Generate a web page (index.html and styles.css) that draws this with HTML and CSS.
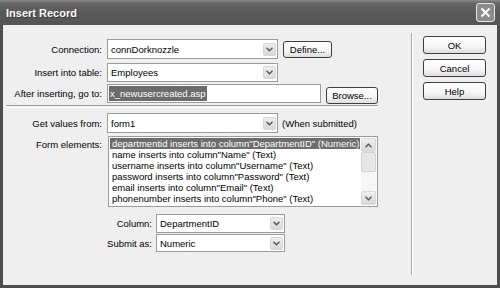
FILE: index.html
```html
<!DOCTYPE html>
<html lang="en">
<head>
    <meta charset="UTF-8">
    <title>Insert Record</title>
    <link rel="stylesheet" href="styles.css">
</head>
<body>
    <div class="window">
        <!-- Title bar -->
        <div class="titlebar">
            <span class="title">Insert Record</span>
            <span class="close-box">
                <svg width="11" height="11" viewBox="0 0 11 11"><path d="M1.5 1.5 L9.5 9.5 M9.5 1.5 L1.5 9.5" stroke="#fff" stroke-width="2" fill="none"/></svg>
            </span>
        </div>

        <div class="client">
            <div class="main">
                <div class="row row-conn">
                    <span class="lbl">Connection:</span>
                    <div class="select sel-wide"><span class="val">connDorknozzle</span><span class="drop"><svg width="7" height="5" viewBox="0 0 7 5"><path d="M0.5 0.8 L3.5 3.8 L6.5 0.8" stroke="#555" stroke-width="1.4" fill="none"/></svg></span></div>
                    <button class="btn btn-define">Define...</button>
                </div>
                <div class="row row-table">
                    <span class="lbl">Insert into table:</span>
                    <div class="select sel-wide"><span class="val">Employees</span><span class="drop"><svg width="7" height="5" viewBox="0 0 7 5"><path d="M0.5 0.8 L3.5 3.8 L6.5 0.8" stroke="#555" stroke-width="1.4" fill="none"/></svg></span></div>
                </div>
                <div class="row row-goto">
                    <span class="lbl">After inserting, go to:</span>
                    <div class="textbox"><span class="selected-text">x_newusercreated.asp</span></div>
                    <button class="btn btn-browse">Browse...</button>
                </div>

                <div class="hsep"></div>

                <div class="row row-form">
                    <span class="lbl">Get values from:</span>
                    <div class="select sel-wide"><span class="val">form1</span><span class="drop"><svg width="7" height="5" viewBox="0 0 7 5"><path d="M0.5 0.8 L3.5 3.8 L6.5 0.8" stroke="#555" stroke-width="1.4" fill="none"/></svg></span></div>
                    <span class="note">(When submitted)</span>
                </div>
                <div class="row row-list">
                    <span class="lbl lbl-top">Form elements:</span>
                    <div class="listbox">
                        <div class="items">
                            <div class="item active">departmentid inserts into column"DepartmentID" (Numeric)</div>
                            <div class="item">name inserts into column"Name" (Text)</div>
                            <div class="item">username inserts into column"Username" (Text)</div>
                            <div class="item">password inserts into column"Password" (Text)</div>
                            <div class="item">email inserts into column"Email" (Text)</div>
                            <div class="item">phonenumber inserts into column"Phone" (Text)</div>
                        </div>
                        <div class="scrollbar">
                            <span class="sb-btn"><svg width="7" height="5" viewBox="0 0 7 5"><path d="M0.5 4.2 L3.5 1.2 L6.5 4.2" stroke="#555" stroke-width="1.4" fill="none"/></svg></span>
                            <span class="sb-thumb"></span>
                            <span class="sb-track"></span>
                            <span class="sb-btn"><svg width="7" height="5" viewBox="0 0 7 5"><path d="M0.5 0.8 L3.5 3.8 L6.5 0.8" stroke="#555" stroke-width="1.4" fill="none"/></svg></span>
                        </div>
                    </div>
                </div>
                <div class="row row-col">
                    <span class="lbl lbl-sub">Column:</span>
                    <div class="select sel-narrow"><span class="val">DepartmentID</span><span class="drop"><svg width="7" height="5" viewBox="0 0 7 5"><path d="M0.5 0.8 L3.5 3.8 L6.5 0.8" stroke="#555" stroke-width="1.4" fill="none"/></svg></span></div>
                </div>
                <div class="row row-submit">
                    <span class="lbl lbl-sub">Submit as:</span>
                    <div class="select sel-narrow"><span class="val">Numeric</span><span class="drop"><svg width="7" height="5" viewBox="0 0 7 5"><path d="M0.5 0.8 L3.5 3.8 L6.5 0.8" stroke="#555" stroke-width="1.4" fill="none"/></svg></span></div>
                </div>
            </div>

            <div class="vsep"></div>

            <div class="side">
                <button class="btn side-btn">OK</button>
                <button class="btn side-btn">Cancel</button>
                <button class="btn side-btn">Help</button>
            </div>
        </div>
    </div>
</body>
</html>
```

FILE: styles.css
```css
body {
    margin: 0;
    padding: 0;
    font-family: 'Liberation Sans', Arial, sans-serif;
    font-size: 9.5px;
    color: #000;
    background: #fff;
}

/* Window frame */
.window {
    width: 500px;
    height: 288px;
    background: #4e4e4e;
    display: flex;
    flex-direction: column;
    overflow: hidden;
}

.titlebar {
    height: 25px;
    flex: none;
    display: flex;
    align-items: center;
    justify-content: space-between;
    padding: 0 5px 0 6px;
    background: linear-gradient(#8a8a8a 0, #666 3px, #5a5a5a 12px, #545454 100%);
}

.title {
    color: #fff;
    font-weight: bold;
    font-size: 11px;
    text-shadow: 1px 1px 0 #3a3a3a;
}

.close-box {
    width: 17px;
    height: 17px;
    border: 1px solid #e8e8e8;
    border-radius: 3px;
    background: #8c8c8c;
    display: flex;
    align-items: center;
    justify-content: center;
}

.client {
    flex: 1;
    margin: 0 3px 3px 3px;
    background: #efefef;
    display: flex;
}

/* Left form area */
.main {
    width: 408px;
    padding-top: 14px;
    display: flex;
    flex-direction: column;
}

.row {
    display: flex;
    align-items: center;
}

.lbl {
    width: 99px;
    margin-right: 5px;
    text-align: right;
    white-space: nowrap;
}

.lbl-sub {
    width: 149px;
    margin-right: 4px;
}

.lbl-top {
    align-self: flex-start;
    margin-top: 3px;
}

.row-conn { height: 20px; }
.row-table { height: 19px; margin-top: 4px; }
.row-goto { height: 19px; margin-top: 2px; }
.row-form { height: 20px; margin-top: 5px; }
.row-list { margin-top: 3px; }
.row-col { height: 19px; margin-top: 7px; }
.row-submit { height: 18px; margin-top: 1px; }

.select {
    height: 100%;
    box-sizing: border-box;
    border: 1px solid #9b9b9b;
    background: #fff;
    display: flex;
    align-items: center;
    justify-content: space-between;
    padding: 0 1px 0 3px;
}

.sel-wide { width: 171px; }
.sel-narrow { width: 129px; }

.drop {
    width: 13px;
    height: 13px;
    box-sizing: border-box;
    border: 1px solid #d6d6d6;
    border-radius: 2px;
    background: linear-gradient(#eeeeee, #d9d9d9);
    display: flex;
    align-items: center;
    justify-content: center;
}

.textbox {
    width: 214px;
    height: 19px;
    box-sizing: border-box;
    border: 1px solid #9b9b9b;
    background: #fff;
    display: flex;
    align-items: center;
    padding-left: 1px;
}

.selected-text {
    background: #6c6c6c;
    color: #fff;
    padding: 1px 1px;
    line-height: 13px;
}

.note {
    margin-left: 4px;
}

/* Buttons */
.btn {
    font-family: inherit;
    font-size: 9.5px;
    color: #000;
    height: 17px;
    padding: 0;
    box-sizing: border-box;
    border: 1px solid #3e3e3e;
    border-radius: 3px;
    background: linear-gradient(#ffffff 0, #f5f5f5 60%, #dedede 100%);
}

.btn-define {
    width: 49px;
    margin-left: 5px;
}

.btn-browse {
    width: 52px;
    margin-left: 5px;
    margin-top: 3px;
}

.hsep {
    margin: 2px 0 0 3px;
    width: 372px;
    height: 1px;
    border-top: 1px solid #a2a2a2;
    border-bottom: 1px solid #fff;
}

/* List box */
.listbox {
    width: 270px;
    height: 71px;
    margin-left: 1px;
    box-sizing: border-box;
    border: 1px solid #9b9b9b;
    background: #fff;
    display: flex;
    padding: 1px;
}

.items {
    flex: 1;
    overflow: hidden;
}

.item {
    height: 11px;
    line-height: 11px;
    padding-left: 2px;
    white-space: nowrap;
}

.item.active {
    background: #6c6c6c;
    color: #fff;
    margin-right: 1px;
}

.scrollbar {
    width: 15px;
    display: flex;
    flex-direction: column;
    background: #f6f6f6;
}

.sb-btn {
    height: 12px;
    border: 1px solid #d9d9d9;
    border-radius: 2px;
    background: linear-gradient(#efefef, #d8d8d8);
    display: flex;
    align-items: center;
    justify-content: center;
}

.sb-thumb {
    height: 20px;
    box-sizing: border-box;
    border: 1px solid #d2d2d2;
    border-radius: 2px;
    background: linear-gradient(90deg, #e4e4e4, #eaeaea);
}

.sb-track {
    flex: 1;
}

/* Separator and right buttons */
.vsep {
    width: 0;
    border-left: 1px solid #a8a8a8;
    border-right: 1px solid #fff;
    margin: 8px 0 10px 0;
}

.side {
    display: flex;
    flex-direction: column;
    gap: 5px;
    padding: 11px 0 0 10px;
}

.side-btn {
    width: 63px;
    height: 18px;
}
```
